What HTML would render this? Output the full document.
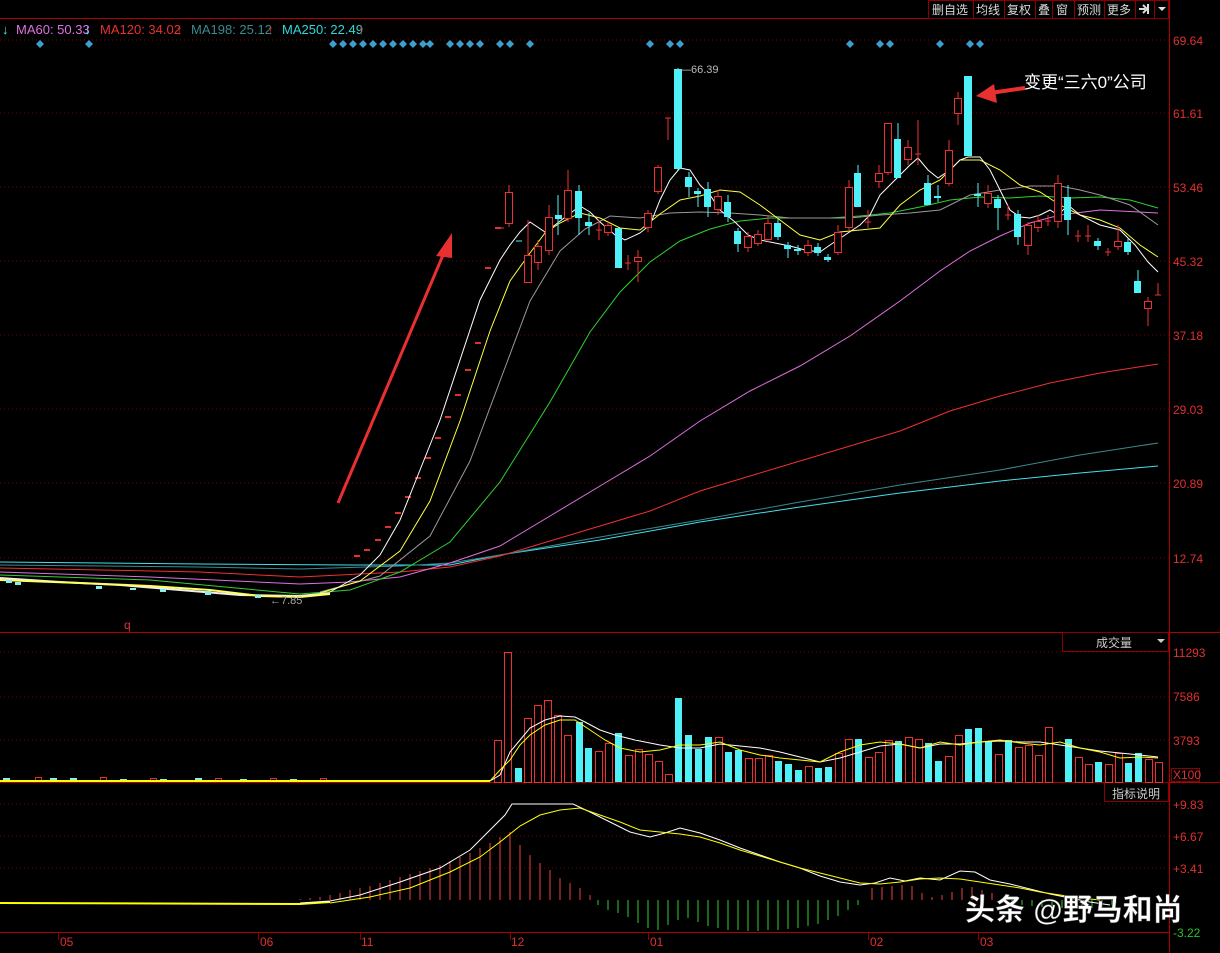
<!DOCTYPE html>
<html><head><meta charset="utf-8">
<style>
html,body{margin:0;padding:0;background:#000;}
body{width:1220px;height:953px;overflow:hidden;position:relative;font-family:"Liberation Sans","Noto Sans CJK SC",sans-serif;}
svg{position:absolute;left:0;top:0;}
</style></head><body>
<svg width="1220" height="953" viewBox="0 0 1220 953" xmlns="http://www.w3.org/2000/svg" font-family="Liberation Sans, Noto Sans CJK SC, sans-serif">
<rect width="1220" height="953" fill="#000"/>
<!-- grid -->
<g stroke="#7a0000" stroke-width="1" stroke-dasharray="1,3">
<line x1="0" y1="40" x2="1169" y2="40"/><line x1="0" y1="113" x2="1169" y2="113"/><line x1="0" y1="187" x2="1169" y2="187"/><line x1="0" y1="261" x2="1169" y2="261"/><line x1="0" y1="335" x2="1169" y2="335"/><line x1="0" y1="409" x2="1169" y2="409"/><line x1="0" y1="483" x2="1169" y2="483"/><line x1="0" y1="558" x2="1169" y2="558"/>
<line x1="0" y1="652" x2="1169" y2="652"/><line x1="0" y1="697" x2="1169" y2="697"/><line x1="0" y1="740" x2="1169" y2="740"/>
<line x1="0" y1="804" x2="1169" y2="804"/><line x1="0" y1="836" x2="1169" y2="836"/><line x1="0" y1="868" x2="1169" y2="868"/>
</g>
<g stroke="#b00000" stroke-width="1">
<line x1="0" y1="18.5" x2="1169" y2="18.5"/><line x1="0" y1="632.5" x2="1220" y2="632.5"/><line x1="0" y1="782.5" x2="1220" y2="782.5"/><line x1="0" y1="932.5" x2="1169" y2="932.5"/>
<line x1="1169.5" y1="0" x2="1169.5" y2="953"/>
</g>
<!-- toolbar -->
<g fill="none" stroke="#8a0000"><rect x="928.5" y="0.5" width="240" height="18"/></g>
<g stroke="#8a0000"><line x1="973.5" y1="0" x2="973.5" y2="18"/><line x1="1004.5" y1="0" x2="1004.5" y2="18"/><line x1="1035.5" y1="0" x2="1035.5" y2="18"/><line x1="1052.5" y1="0" x2="1052.5" y2="18"/><line x1="1074.5" y1="0" x2="1074.5" y2="18"/><line x1="1104.5" y1="0" x2="1104.5" y2="18"/><line x1="1135.5" y1="0" x2="1135.5" y2="18"/><line x1="1154.5" y1="0" x2="1154.5" y2="18"/></g>
<g fill="#d8d8d8" font-size="12"><text x="932" y="14">删自选</text><text x="976" y="14">均线</text><text x="1007" y="14">复权</text><text x="1038" y="14">叠</text><text x="1056" y="14">窗</text><text x="1077" y="14">预测</text><text x="1107" y="14">更多</text></g>
<path d="M1139 9h6M1143 5l4 4-4 4M1148 4v10" stroke="#ddd" stroke-width="2" fill="none"/>
<path d="M1158 7h8l-4 4z" fill="#ddd"/>
<!-- legend -->
<g font-size="13"><text x="2" y="34" fill="#4ee">↓</text><text x="16" y="34" fill="#e070e0">MA60: 50.33</text><text x="84" y="34" fill="#4ee">↓</text>
<text x="100" y="34" fill="#e83030">MA120: 34.02</text><text x="176" y="34" fill="#e83030">↑</text>
<text x="191" y="34" fill="#3a8a90">MA198: 25.12</text><text x="267" y="34" fill="#e83030">↑</text>
<text x="282" y="34" fill="#30d8d8">MA250: 22.49</text><text x="358" y="34" fill="#e83030">↑</text></g>
<!-- diamonds -->
<g fill="#3aa0d0">
<path d="M40 40l4 4-4 4-4-4z"/><path d="M89 40l4 4-4 4-4-4z"/>
<path d="M333 40l4 4-4 4-4-4zM343 40l4 4-4 4-4-4zM353 40l4 4-4 4-4-4zM363 40l4 4-4 4-4-4zM373 40l4 4-4 4-4-4zM383 40l4 4-4 4-4-4zM393 40l4 4-4 4-4-4zM403 40l4 4-4 4-4-4zM413 40l4 4-4 4-4-4zM423 40l4 4-4 4-4-4zM430 40l4 4-4 4-4-4z"/>
<path d="M450 40l4 4-4 4-4-4zM460 40l4 4-4 4-4-4zM470 40l4 4-4 4-4-4zM480 40l4 4-4 4-4-4zM500 40l4 4-4 4-4-4zM510 40l4 4-4 4-4-4zM530 40l4 4-4 4-4-4zM650 40l4 4-4 4-4-4zM670 40l4 4-4 4-4-4zM680 40l4 4-4 4-4-4zM850 40l4 4-4 4-4-4zM880 40l4 4-4 4-4-4zM890 40l4 4-4 4-4-4zM940 40l4 4-4 4-4-4zM970 40l4 4-4 4-4-4zM980 40l4 4-4 4-4-4z"/>
</g>
<!-- price axis -->
<g fill="#e03030" font-size="12"><text x="1173" y="45">69.64</text><text x="1173" y="118">61.61</text><text x="1173" y="192">53.46</text><text x="1173" y="266">45.32</text><text x="1173" y="340">37.18</text><text x="1173" y="414">29.03</text><text x="1173" y="488">20.89</text><text x="1173" y="563">12.74</text>
<text x="1173" y="657">11293</text><text x="1173" y="701">7586</text><text x="1173" y="745">3793</text>
<text x="1173" y="809">+9.83</text><text x="1173" y="841">+6.67</text><text x="1173" y="873">+3.41</text></g>
<text x="1173" y="937" fill="#30c030" font-size="12">-3.22</text>
<rect x="1171.5" y="768.5" width="28" height="13" fill="none" stroke="#8a0000"/><text x="1173" y="779" fill="#e03030" font-size="12">X100</text>
<rect x="1062.5" y="632.5" width="106" height="19" fill="none" stroke="#8a0000"/><text x="1096" y="647" fill="#ccc" font-size="12">成交量</text><path d="M1157 639h8l-4 4z" fill="#ccc"/>
<rect x="1104.5" y="782.5" width="64" height="19" fill="none" stroke="#8a0000"/><text x="1112" y="798" fill="#ccc" font-size="12">指标说明</text>
<!-- pre-rise noise -->
<g stroke-width="2" fill="none">
<polyline stroke="#eee" points="0,578 60,582 120,585 180,590 240,595 300,596 330,593"/>
<polyline stroke="#ffff60" points="0,580 80,583 150,586 210,590 260,596 300,597 330,594"/>
</g>
<g fill="#8ee"><rect x="6" y="580" width="6" height="3"/><rect x="96" y="586" width="6" height="3"/><rect x="130" y="588" width="6" height="2"/><rect x="205" y="591" width="6" height="4"/><rect x="255" y="595" width="6" height="3"/><rect x="15" y="582" width="6" height="3"/><rect x="160" y="589" width="6" height="3"/></g>
<text x="270" y="604" fill="#aaa" font-size="11">←7.85</text>
<text x="124" y="629" fill="#e03030" font-size="12">q</text>
<!-- limit-up dashes -->
<g stroke="#e03030" stroke-width="2">
<path d="M354 556h6M364 550h6M375 540h6M385 527h6M395 513h6M405 497h6M415 478h6M425 458h6M435 438h6M445 417h6M455 395h6M465 370h6M475 343h6M485 268h6M495 228h6"/>
</g>
<!-- MA lines -->
<g fill="none" stroke-width="1">
<polyline stroke="#40e0f0" points="0,562 200,564 350,565 450,565 500,555 600,540 700,522 800,507 900,493 1000,481 1080,473 1158,466"/>
<polyline stroke="#3a8a90" points="0,565 200,567 300,569 400,566 450,563 500,555 600,537 700,520 800,502 900,485 1000,470 1080,455 1158,443"/>
<polyline stroke="#f03030" points="0,568 200,572 300,577 400,572 450,567 500,556 550,541 600,526 650,511 700,491 750,476 800,461 850,446 900,431 950,411 1000,396 1050,383 1100,373 1158,364"/>
<polyline stroke="#e070e0" points="0,572 150,577 300,584 350,582 400,577 450,563 500,546 550,516 600,486 650,456 700,421 750,391 800,366 850,336 900,301 940,271 970,251 1000,236 1030,223 1060,215 1100,210 1158,213"/>
<polyline stroke="#30d030" points="0,575 150,580 300,594 350,590 400,572 450,542 500,482 550,402 590,332 620,292 650,262 680,241 710,229 740,221 770,218 800,218 830,218 860,216 890,213 920,207 950,200 980,197 1010,198 1040,196 1070,198 1100,197 1130,200 1158,208"/>
<polyline stroke="#999" points="320,592 380,576 430,536 470,461 500,381 530,301 560,251 585,229 610,216 640,218 670,213 700,212 730,213 760,215 790,218 820,218 850,218 880,215 910,213 940,210 970,195 1000,190 1030,186 1060,186 1080,190 1100,195 1130,205 1158,225"/>
<polyline stroke="#ffff40" points="320,593 360,581 400,551 430,501 460,421 490,331 510,281 530,253 545,233 560,223 580,213 600,218 620,228 640,230 660,214 680,200 700,196 720,190 740,192 760,205 780,220 800,235 820,240 840,232 860,230 880,228 900,205 920,190 940,180 960,160 980,160 1000,170 1020,185 1040,192 1060,205 1080,215 1100,220 1120,228 1140,245 1158,257"/>
<polyline stroke="#fff" points="330,592 360,575 380,555 400,520 420,470 440,420 460,360 480,300 500,260 510,245 520,232 530,222 545,232 555,225 568,215 580,206 590,212 600,222 615,235 625,240 640,233 650,225 660,200 670,180 680,168 690,170 700,185 710,195 720,210 735,222 748,235 760,240 775,243 790,246 805,250 820,252 830,245 845,235 860,225 870,215 880,195 890,185 900,175 910,165 918,158 928,170 938,178 950,170 960,160 968,157 980,157 990,170 1000,190 1010,210 1020,217 1030,218 1040,215 1050,210 1058,215 1068,205 1080,215 1100,225 1120,230 1135,245 1148,262 1158,272"/>
</g>
<!-- candles red (hollow) -->
<g stroke="#f03030" fill="none" stroke-width="1">
<path d="M509 185V227M498 228h6M528 220V282M538 240V270M549 205V255M568 170V222M599 220V240M596 230h6M608 222V236M628 255V270M625 263h6M638 250V282M648 210V232M658 165V194M668 118V140M665 118h6M718 190V215M748 232V252M758 230V246M768 215V242M808 240V256M838 225V255M849 180V230M868 210V228M865 222h6M879 165V188M888 123V175M908 140V165M918 120V165M915 154h6M949 140V186M958 92V125M988 185V208M1008 205V220M1005 215h6M1028 222V255M1038 215V232M1048 215V226M1045 221h6M1058 175V228M1078 230V242M1075 236h6M1088 225V242M1085 236h6M1108 248V256M1105 252h6M1118 225V250M1148 297V326M1158 283V295M1155 295h6"/>
</g>
<g stroke="#f03030" fill="#000" stroke-width="1">
<rect x="505.5" y="192.5" width="7" height="31"/><rect x="524.5" y="255.5" width="7" height="27"/><rect x="534.5" y="246.5" width="7" height="16"/><rect x="545.5" y="217.5" width="7" height="33"/><rect x="564.5" y="190.5" width="7" height="28"/><rect x="604.5" y="225.5" width="7" height="7"/><rect x="634.5" y="257.5" width="7" height="4"/><rect x="644.5" y="213.5" width="7" height="14"/><rect x="654.5" y="167.5" width="7" height="24"/><rect x="714.5" y="196.5" width="7" height="13"/><rect x="744.5" y="236.5" width="7" height="11"/><rect x="754.5" y="234.5" width="7" height="9"/><rect x="764.5" y="223.5" width="7" height="16"/><rect x="804.5" y="245.5" width="7" height="7"/><rect x="834.5" y="232.5" width="7" height="20"/><rect x="845.5" y="187.5" width="7" height="40"/><rect x="875.5" y="173.5" width="7" height="8"/><rect x="884.5" y="123.5" width="7" height="49"/><rect x="904.5" y="147.5" width="7" height="12"/><rect x="945.5" y="150.5" width="7" height="33"/><rect x="954.5" y="98.5" width="7" height="15"/><rect x="984.5" y="193.5" width="7" height="10"/><rect x="1024.5" y="225.5" width="7" height="20"/><rect x="1034.5" y="221.5" width="7" height="6"/><rect x="1054.5" y="183.5" width="7" height="38"/><rect x="1114.5" y="241.5" width="7" height="5"/><rect x="1144.5" y="301.5" width="7" height="7"/>
</g>
<!-- candles cyan -->
<g stroke="#50f0f8" stroke-width="1">
<path d="M558 195V235M579 185V235M589 213V235M619 228V268M678 68V170M689 172V197M698 188V207M708 182V217M728 195V222M738 228V252M778 218V240M788 242V258M798 245V255M818 243V256M828 254V262M858 165V207M898 123V178M928 175V205M938 185V202M968 76V156M978 183V207M998 195V230M1018 210V245M1068 185V235M1098 238V250M1128 238V255M1138 270V293M516 241h6"/>
</g>
<g fill="#50f0f8">
<rect x="555" y="215" width="7" height="4"/><rect x="575" y="191" width="7" height="27"/><rect x="585" y="222" width="7" height="4"/><rect x="615" y="228" width="7" height="40"/><rect x="674" y="69" width="8" height="100"/><rect x="685" y="177" width="7" height="10"/><rect x="694" y="191" width="7" height="3"/><rect x="704" y="189" width="7" height="18"/><rect x="724" y="202" width="7" height="15"/><rect x="734" y="231" width="7" height="13"/><rect x="774" y="223" width="7" height="14"/><rect x="784" y="245" width="7" height="4"/><rect x="794" y="249" width="7" height="2"/><rect x="814" y="247" width="7" height="6"/><rect x="824" y="257" width="7" height="3"/><rect x="854" y="173" width="7" height="34"/><rect x="894" y="139" width="7" height="39"/><rect x="924" y="183" width="7" height="22"/><rect x="934" y="196" width="7" height="2"/><rect x="964" y="76" width="8" height="80"/><rect x="974" y="194" width="7" height="2"/><rect x="994" y="199" width="7" height="9"/><rect x="1014" y="214" width="7" height="23"/><rect x="1064" y="197" width="7" height="23"/><rect x="1094" y="241" width="7" height="5"/><rect x="1124" y="242" width="7" height="10"/><rect x="1134" y="281" width="7" height="12"/>
</g>
<text x="680" y="73" fill="#bbb" font-size="11">—66.39</text>
<!-- annotation arrows -->
<path d="M338 503L446 248" stroke="#e83030" stroke-width="3"/>
<path d="M452 233L436 256L452 258z" fill="#e83030"/>
<path d="M1025 88L990 93" stroke="#e83030" stroke-width="4"/>
<path d="M976 96L994 84L997 103z" fill="#e83030"/>
<text x="1024" y="88" fill="#fff" font-size="17">变更“三六0”公司</text>
<!-- volume pre-rise -->
<g fill="#8ee"><rect x="3" y="778" width="7" height="4"/><rect x="50" y="778" width="7" height="4"/><rect x="70" y="778" width="7" height="4"/><rect x="120" y="779" width="7" height="3"/><rect x="160" y="779" width="7" height="3"/><rect x="195" y="778" width="7" height="4"/><rect x="240" y="779" width="7" height="3"/><rect x="290" y="779" width="7" height="3"/></g>
<g stroke="#e03030" fill="none"><rect x="35.5" y="777.5" width="6" height="4"/><rect x="100.5" y="777.5" width="6" height="4"/><rect x="150.5" y="778.5" width="6" height="3"/><rect x="215.5" y="778.5" width="6" height="3"/><rect x="270.5" y="778.5" width="6" height="3"/><rect x="320.5" y="778.5" width="6" height="3"/></g>
<polyline fill="none" stroke="#ff0" stroke-width="2" points="0,781 490,781"/>
<!-- volume bars red -->
<g stroke="#f03030" fill="none">
<rect x="494.5" y="740.5" width="7" height="42"/><rect x="504.5" y="652.5" width="7" height="130"/><rect x="524.5" y="718.5" width="7" height="64"/><rect x="534.5" y="705.5" width="7" height="77"/><rect x="544.5" y="700.5" width="7" height="82"/><rect x="554.5" y="715.5" width="7" height="67"/><rect x="564.5" y="735.5" width="7" height="47"/>
<rect x="595.5" y="751.5" width="7" height="31"/><rect x="605.5" y="743.5" width="7" height="39"/><rect x="625.5" y="755.5" width="7" height="27"/><rect x="635.5" y="749.5" width="7" height="33"/><rect x="645.5" y="754.5" width="7" height="28"/><rect x="655.5" y="761.5" width="7" height="21"/><rect x="665.5" y="774.5" width="7" height="8"/><rect x="715.5" y="737.5" width="7" height="45"/><rect x="745.5" y="758.5" width="7" height="24"/><rect x="755.5" y="758.5" width="7" height="24"/><rect x="765.5" y="755.5" width="7" height="27"/><rect x="805.5" y="766.5" width="7" height="16"/><rect x="835.5" y="753.5" width="7" height="29"/><rect x="845.5" y="739.5" width="7" height="43"/><rect x="865.5" y="757.5" width="7" height="25"/><rect x="875.5" y="752.5" width="7" height="30"/><rect x="885.5" y="740.5" width="7" height="42"/><rect x="905.5" y="737.5" width="7" height="45"/><rect x="915.5" y="739.5" width="7" height="43"/><rect x="945.5" y="756.5" width="7" height="26"/><rect x="955.5" y="735.5" width="7" height="47"/><rect x="995.5" y="754.5" width="7" height="28"/><rect x="1015.5" y="747.5" width="7" height="35"/><rect x="1025.5" y="745.5" width="7" height="37"/><rect x="1035.5" y="755.5" width="7" height="27"/><rect x="1045.5" y="727.5" width="7" height="55"/><rect x="1075.5" y="757.5" width="7" height="25"/><rect x="1085.5" y="764.5" width="7" height="18"/><rect x="1105.5" y="764.5" width="7" height="18"/><rect x="1115.5" y="753.5" width="7" height="29"/><rect x="1145.5" y="759.5" width="7" height="23"/><rect x="1155.5" y="762.5" width="7" height="20"/>
</g>
<g fill="#50f0f8">
<rect x="515" y="768" width="7" height="14"/><rect x="576" y="722" width="7" height="60"/><rect x="585" y="748" width="7" height="34"/><rect x="615" y="733" width="7" height="49"/><rect x="675" y="698" width="7" height="84"/><rect x="685" y="735" width="7" height="47"/><rect x="695" y="749" width="7" height="33"/><rect x="705" y="737" width="7" height="45"/><rect x="725" y="752" width="7" height="30"/><rect x="735" y="750" width="7" height="32"/><rect x="775" y="761" width="7" height="21"/><rect x="785" y="764" width="7" height="18"/><rect x="795" y="770" width="7" height="12"/><rect x="815" y="768" width="7" height="14"/><rect x="825" y="767" width="7" height="15"/><rect x="855" y="739" width="7" height="43"/><rect x="895" y="741" width="7" height="41"/><rect x="925" y="743" width="7" height="39"/><rect x="935" y="761" width="7" height="21"/><rect x="965" y="729" width="7" height="53"/><rect x="975" y="728" width="7" height="54"/><rect x="985" y="741" width="7" height="41"/><rect x="1005" y="740" width="7" height="42"/><rect x="1065" y="739" width="7" height="43"/><rect x="1095" y="762" width="7" height="20"/><rect x="1125" y="763" width="7" height="19"/><rect x="1135" y="753" width="7" height="29"/>
</g>
<g fill="none" stroke-width="1">
<polyline stroke="#fff" points="490,781 500,775 510,752 520,740 530,728 545,720 560,716 575,717 585,722 600,730 615,735 635,740 660,745 680,748 700,748 720,744 740,746 760,748 780,752 800,757 820,762 840,758 860,752 880,746 900,744 920,748 940,744 960,744 980,742 1000,741 1020,742 1040,742 1060,745 1080,748 1100,751 1120,753 1140,755 1158,757"/>
<polyline stroke="#ff0" points="490,781 500,770 510,760 520,745 530,735 545,725 560,720 575,720 590,730 605,740 620,748 640,752 660,750 680,745 700,745 720,742 740,750 760,755 780,758 800,760 820,762 840,752 860,745 880,742 900,744 920,748 940,742 960,745 980,742 1000,740 1020,743 1040,745 1060,742 1080,748 1100,752 1120,758 1140,757 1158,758"/>
</g>
<!-- MACD histogram -->
<path stroke="#f04040" stroke-width="1" d="M300 900v-1M310 900v-2M320 900v-3M330 900v-5M340 900v-7M350 900v-10M360 900v-12M370 900v-14M380 900v-17M390 900v-20M400 900v-23M410 900v-26M420 900v-29M430 900v-32M440 900v-35M450 900v-39M460 900v-43M470 900v-47M480 900v-52M490 900v-57M500 900v-63M510 900v-68M520 900v-55M530 900v-45M540 900v-37M550 900v-30M560 900v-22M570 900v-17M580 900v-12M590 900v-5M872 900v-12M882 900v-13M892 900v-14M902 900v-15M912 900v-14M922 900v-7M932 900v-3M942 900v-5M952 900v-8M962 900v-12M972 900v-13M982 900v-10M992 900v-7"/>
<path stroke="#30d030" stroke-width="1" d="M598 900v5M608 900v10M618 900v13M628 900v17M638 900v23M648 900v28M658 900v30M668 900v25M678 900v20M688 900v18M698 900v22M708 900v26M718 900v28M728 900v30M738 900v30M748 900v31M758 900v31M768 900v30M778 900v30M788 900v29M798 900v28M808 900v26M818 900v24M828 900v20M838 900v16M848 900v10M858 900v5M1002 900v3M1012 900v4M1022 900v5M1032 900v6M1042 900v7M1052 900v8M1062 900v8M1072 900v9M1082 900v9M1092 900v8M1102 900v7M1112 900v5"/>
<g fill="none" stroke-width="1">
<polyline stroke="#ff0" stroke-width="2" points="0,903 300,904 330,902"/>
<polyline stroke="#fff" points="300,903 330,901 360,895 400,882 440,868 470,850 490,830 505,815 512,804 573,804 590,812 610,822 630,832 650,837 665,833 680,828 700,833 720,840 740,848 760,855 780,862 800,868 820,876 840,882 860,885 875,883 890,878 905,881 920,878 940,880 960,871 975,872 990,880 1010,884 1030,889 1050,894 1070,898 1090,902 1110,905"/>
<polyline stroke="#ff0" points="330,903 370,897 410,888 450,872 480,857 500,842 520,826 540,815 560,810 580,808 600,815 620,822 640,830 660,832 680,834 700,837 720,843 740,850 760,856 780,862 800,868 820,873 840,878 860,883 880,884 900,882 920,879 940,878 960,879 980,882 1000,885 1020,888 1040,892 1060,895 1080,898 1100,900"/>
</g>
<!-- dates -->
<g stroke="#8a0000"><line x1="58.5" y1="933" x2="58.5" y2="940"/><line x1="258.5" y1="933" x2="258.5" y2="940"/><line x1="360.5" y1="933" x2="360.5" y2="940"/><line x1="510.5" y1="933" x2="510.5" y2="940"/><line x1="648.5" y1="933" x2="648.5" y2="940"/><line x1="868.5" y1="933" x2="868.5" y2="940"/><line x1="978.5" y1="933" x2="978.5" y2="940"/></g>
<g fill="#e03030" font-size="12"><text x="60" y="946">05</text><text x="260" y="946">06</text><text x="361" y="946">11</text><text x="511" y="946">12</text><text x="650" y="946">01</text><text x="870" y="946">02</text><text x="980" y="946">03</text></g>
<!-- watermark -->
<text x="965" y="920" fill="#fff" font-size="30" font-weight="bold" stroke="#333" stroke-width="0.5">头条 @野马和尚</text>
</svg>
</body></html>
